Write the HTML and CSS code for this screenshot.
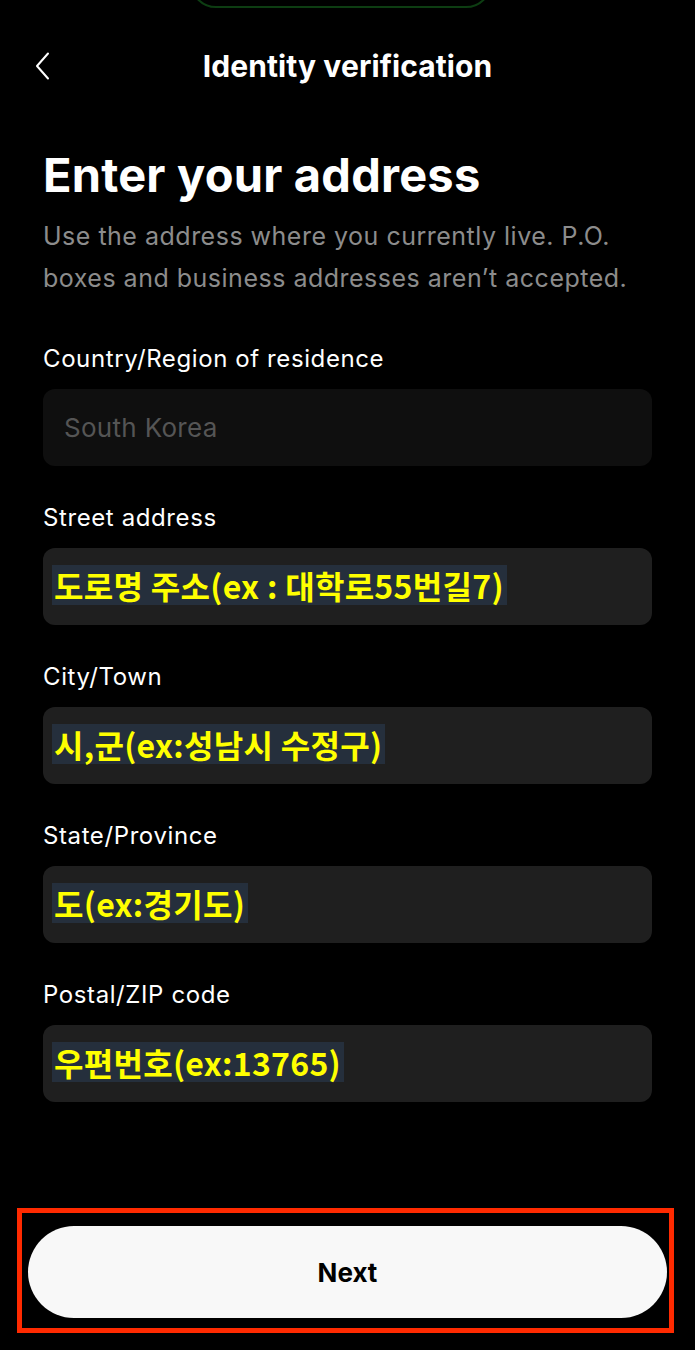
FILE: index.html
```html
<!DOCTYPE html>
<html>
<head>
  <title>Identity verification</title>
  <meta name="viewport" content="width=device-width, initial-scale=1.0">
  <link rel="stylesheet" href="styles.css">
</head>
<body>
  <div class="island"></div>

  <header class="topbar">
    <button class="back" aria-label="Back">
      <svg width="18" height="28" viewBox="0 0 18 28">
        <path d="M15 1.5 L4 14 L15 26.5" fill="none" stroke="#fff" stroke-width="2" stroke-linecap="round" stroke-linejoin="round"/>
      </svg>
    </button>
    <div class="title">Identity verification</div>
  </header>

  <main class="content">
    <h1>Enter your address</h1>
    <p class="hint">Use the address where you currently live. P.O. boxes and business addresses aren’t accepted.</p>

    <div class="field">
      <label>Country/Region of residence</label>
      <div class="input disabled">South Korea</div>
    </div>

    <div class="field">
      <label>Street address</label>
      <div class="input"><span class="mark">도로명 주소(ex : 대학로55번길7)</span></div>
    </div>

    <div class="field">
      <label>City/Town</label>
      <div class="input"><span class="mark">시,군(ex:성남시 수정구)</span></div>
    </div>

    <div class="field">
      <label>State/Province</label>
      <div class="input"><span class="mark">도(ex:경기도)</span></div>
    </div>

    <div class="field">
      <label>Postal/ZIP code</label>
      <div class="input"><span class="mark">우편번호(ex:13765)</span></div>
    </div>
  </main>

  <footer class="bottom">
    <div class="outline">
      <button class="next">Next</button>
    </div>
  </footer>
</body>
</html>
```

FILE: styles.css
```css
body {
  margin: 0;
  background-color: #000;
  color: #fff;
  font-family: Inter, "Noto Sans", sans-serif;
  width: 695px;
  height: 1350px;
  overflow: hidden;
  display: flex;
  flex-direction: column;
}

.island {
  width: 298px;
  height: 30px;
  margin: -26px 0 0 190px;
  border: 2px solid #0d3d12;
  border-radius: 0 0 26px 26px;
}

.topbar {
  height: 62px;
  display: flex;
  align-items: center;
  justify-content: center;
  position: relative;
  margin-top: 27px;
}

.back {
  position: absolute;
  left: 33px;
  top: 17px;
  background: none;
  border: none;
  padding: 0;
}

.title {
  font-size: 30px;
  font-weight: 700;
  letter-spacing: 0.1px;
}

.content {
  padding: 0 43px;
  flex: 1;
}

h1 {
  font-size: 47px;
  font-weight: 700;
  margin: 50px 0 0;
  letter-spacing: 0.2px;
  line-height: 56px;
}

.hint {
  font-size: 25px;
  line-height: 42px;
  letter-spacing: 0.5px;
  color: #8c8c8c;
  margin: 12px 0 41px;
}

.field label {
  display: block;
  font-size: 24px;
  line-height: 38px;
  letter-spacing: 0.6px;
  margin-bottom: 11px;
}

.field {
  margin-bottom: 33px;
}

.input {
  height: 77px;
  border-radius: 12px;
  background-color: #1f1f1f;
  display: flex;
  align-items: flex-start;
  padding: 17px 9px 0;
  box-sizing: border-box;
  font-size: 26px;
}

.input.disabled {
  background-color: #0f0f0f;
  color: #555;
  align-items: center;
  padding: 0 0 0 21px;
  letter-spacing: 0.3px;
}

.mark {
  background-color: #252f3c;
  color: #ffff00;
  font-family: "Noto Sans CJK KR", sans-serif;
  font-weight: 700;
  font-size: 32px;
  line-height: 40px;
  padding: 0 3px 0 2px;
  letter-spacing: 0.3px;
}

.bottom {
  padding: 0 21px 17px 17px;
}

.outline {
  border: 5px solid #ff2a00;
  padding: 13px 2px 10px 6px;
}

.next {
  display: block;
  width: 100%;
  height: 92px;
  border: none;
  border-radius: 46px;
  background-color: #f8f8f8;
  color: #000;
  font-family: Inter, sans-serif;
  font-size: 26px;
  font-weight: 700;
}
```
